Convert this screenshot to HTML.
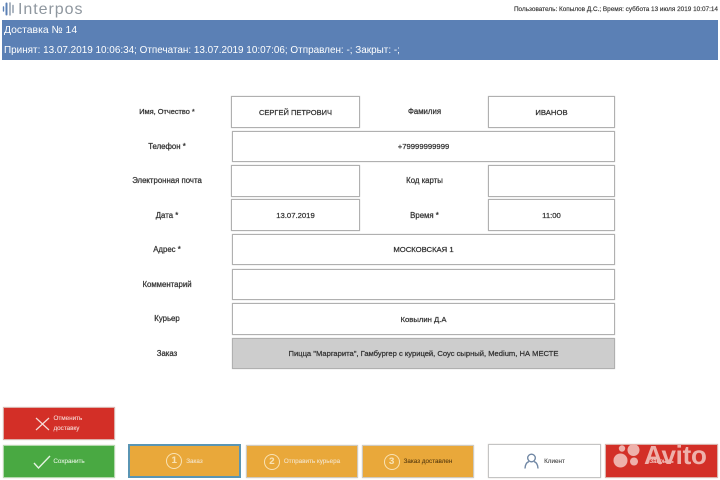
<!DOCTYPE html>
<html lang="ru">
<head>
<meta charset="utf-8">
<title>Interpos</title>
<style>
html,body{margin:0;padding:0;background:#fff}
#p{position:relative;width:720px;height:480px;overflow:hidden;background:#fff;font-family:"Liberation Sans",sans-serif;color:#333}
#p>*{position:absolute;box-sizing:border-box}
.f{border:1px solid #b0b0b0;box-shadow:0 0 1px #c4c4c4;background:#fff;display:flex;align-items:center;justify-content:center;font-size:7.7px;color:#333;-webkit-text-stroke:.25px #333}
.l{font-size:7.8px;text-align:center;color:#333;line-height:12px;margin-top:1px;-webkit-text-stroke:.25px #333;white-space:nowrap}
.b{display:flex;align-items:center;justify-content:center;font-size:6.3px;color:#f3e3c8;border:1px solid #cfcabf;box-shadow:0 0 1px #cfcabf;background:#e9a83a;white-space:nowrap;-webkit-text-stroke:.1px currentColor}
.n{width:16px;height:16px;border:1.6px solid #f8e2b4;border-radius:50%;box-sizing:border-box;font-size:9.5px;font-weight:bold;line-height:13px;text-align:center;color:#f8e2b4;margin-right:4px}
</style>
</head>
<body>
<div id="p">
<svg style="left:2px;top:2px" width="14" height="14" viewBox="0 0 14 14"><g fill="none" stroke="#5b80b5" stroke-linecap="round"><path d="M1.5 5v4" stroke-width="1.4"/><path d="M4.5 1.5v11" stroke-width="2"/><path d="M8 1v12" stroke-width="1.4" stroke="#8a98a8"/><path d="M11 3.5v7" stroke-width="1.4" stroke="#8a98a8"/></g></svg>
<div style="left:18px;top:0;font-size:16px;line-height:20px;color:#8f979f;letter-spacing:.95px;font-weight:normal">Interpos</div>
<div style="right:2px;top:5px;font-size:6.4px;line-height:9px;color:#333;white-space:nowrap;-webkit-text-stroke:.15px #333">Пользователь: Копылов Д.С.; Время: суббота 13 июля 2019 10:07:14</div>
<div style="left:2px;top:20px;width:716px;height:40px;background:#5b80b5"></div>
<div style="left:4px;top:24px;font-size:10.4px;line-height:14px;color:#fff;white-space:nowrap">Доставка № 14</div>
<div style="left:4px;top:44px;font-size:9.93px;line-height:14px;color:#fff;white-space:nowrap">Принят: 13.07.2019 10:06:34; Отпечатан: 13.07.2019 10:07:06; Отправлен: -; Закрыт: -;</div>

<div class="l" style="left:120px;top:105px;width:94px;font-size:7.4px">Имя, Отчество *</div>
<div class="f" style="left:231px;top:96px;width:129px;height:32px;font-size:7.5px">СЕРГЕЙ ПЕТРОВИЧ</div>
<div class="l" style="left:377px;top:105px;width:95px">Фамилия</div>
<div class="f" style="left:488px;top:96px;width:127px;height:32px">ИВАНОВ</div>

<div class="l" style="left:120px;top:140px;width:94px">Телефон *</div>
<div class="f" style="left:232px;top:131px;width:383px;height:31px">+79999999999</div>

<div class="l" style="left:120px;top:174px;width:94px">Электронная почта</div>
<div class="f" style="left:231px;top:165px;width:129px;height:32px"></div>
<div class="l" style="left:377px;top:174px;width:95px">Код карты</div>
<div class="f" style="left:488px;top:165px;width:127px;height:32px"></div>

<div class="l" style="left:120px;top:209px;width:94px">Дата *</div>
<div class="f" style="left:231px;top:199px;width:129px;height:32px">13.07.2019</div>
<div class="l" style="left:377px;top:209px;width:95px">Время *</div>
<div class="f" style="left:488px;top:199px;width:127px;height:32px">11:00</div>

<div class="l" style="left:120px;top:243px;width:94px">Адрес *</div>
<div class="f" style="left:232px;top:234px;width:383px;height:31px">МОСКОВСКАЯ 1</div>

<div class="l" style="left:120px;top:278px;width:94px">Комментарий</div>
<div class="f" style="left:232px;top:269px;width:383px;height:31px"></div>

<div class="l" style="left:120px;top:312px;width:94px">Курьер</div>
<div class="f" style="left:232px;top:303px;width:383px;height:32px">Ковылин Д.А</div>

<div class="l" style="left:120px;top:347px;width:94px">Заказ</div>
<div class="f" style="left:232px;top:338px;width:383px;height:31px;background:#cdcdcd;font-size:7.6px">Пицца "Маргарита", Гамбургер с курицей, Соус сырный, Medium, НА МЕСТЕ</div>

<div class="b" style="left:3px;top:407px;width:112px;height:33px;background:#d32f27;border-color:#dcb0aa;color:#f6d5d0;white-space:normal">
<svg width="15" height="14" viewBox="0 0 15 14" style="margin-right:4px"><path d="M1 1l13 12M14 1L1 13" stroke="#f6dcd8" stroke-width="1.2" fill="none"/></svg>
<span style="line-height:10px;width:30px">Отменить доставку</span></div>

<div class="b" style="left:3px;top:445px;width:112px;height:33px;background:#49a942;border-color:#b2d9ad;color:#dff0dc">
<svg width="18" height="14" viewBox="0 0 18 14" style="margin-right:2px"><path d="M1 8l4.5 5L17 1" stroke="#e4f3e0" stroke-width="1.4" fill="none"/></svg>Сохранить</div>

<div class="b" style="left:128px;top:444px;width:113px;height:34px;border:2px solid #5a95b3;box-shadow:none"><span class="n">1</span>Заказ</div>
<div class="b" style="left:246px;top:445px;width:112px;height:33px"><span class="n">2</span>Отправить курьера</div>
<div class="b" style="left:362px;top:445px;width:112px;height:33px;color:#5a3d10"><span class="n">3</span>Заказ доставлен</div>

<div class="b" style="left:488px;top:444px;width:113px;height:34px;background:#fff;border-color:#c4c4c4;color:#444">
<svg width="15" height="16" viewBox="0 0 15 16" style="margin-right:5px"><g fill="none" stroke="#6f86a3" stroke-width="1.4"><circle cx="7.5" cy="5" r="3.8"/><path d="M1 15.5c0-4 2-6.5 4-6.8M14 15.5c0-4-2-6.5-4-6.8"/></g></svg>Клиент</div>

<div class="b" style="left:605px;top:444px;width:113px;height:34px;background:#d32f27;border-color:#dcb0aa;color:#f6d5d0">Закрыть</div>

<svg style="left:612px;top:443px" width="30" height="28" viewBox="0 0 30 28"><circle cx="10" cy="5.5" r="3.2" fill="#eeb1ab"/><circle cx="21.5" cy="7" r="6" fill="#eeb1ab"/><circle cx="8.5" cy="17.5" r="7" fill="#eeb1ab"/><circle cx="22" cy="18.5" r="4" fill="#eeb1ab"/></svg>
<div style="left:644px;top:439px;font-size:26px;line-height:32px;font-weight:bold;color:#eeb1ab;white-space:nowrap;letter-spacing:-.3px">Avito</div>
</div>
</body>
</html>
